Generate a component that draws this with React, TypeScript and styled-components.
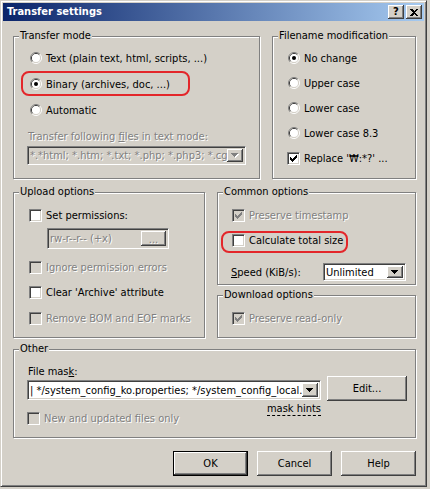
import React from 'react';
import styled, { createGlobalStyle } from 'styled-components';

const FACE = `"DejaVu Sans Condensed", Tahoma, "Liberation Sans", sans-serif`;
const BG = '#D4D0C8';
const SHADOW = '#808080';
const DARK = '#404040';
const RED = '#E3262A';

const GlobalStyle = createGlobalStyle`
  html, body { margin: 0; padding: 0; }
  body {
    width: 430px;
    height: 489px;
    overflow: hidden;
    background: ${BG};
    font-family: ${FACE};
    font-size: 11px;
    color: #000;
  }
`;

const Window = styled.div`
  box-sizing: border-box;
  width: 427px;
  height: 487px;
  background: ${BG};
  border: 1px solid;
  border-color: ${BG} ${DARK} ${DARK} ${BG};
  box-shadow: inset 1px 1px 0 #fff, inset -1px -1px 0 ${SHADOW};
  padding: 2px;
  display: flex;
  flex-direction: column;
`;

const TitleBar = styled.div`
  flex: none;
  height: 18px;
  display: flex;
  align-items: center;
  padding: 0 2px 0 4px;
  background: linear-gradient(90deg, #0a246a, #a6caf0);
`;

const TitleText = styled.div`
  flex: 1;
  color: #fff;
  font-weight: bold;
  font-size: 11px;
  line-height: 18px;
`;

const CaptionButton = styled.div`
  box-sizing: border-box;
  width: 16px;
  height: 14px;
  background: ${BG};
  box-shadow: inset -1px -1px 0 ${DARK}, inset 1px 1px 0 #fff, inset -2px -2px 0 ${SHADOW};
  display: flex;
  align-items: center;
  justify-content: center;
  font-family: "DejaVu Sans", sans-serif;
  font-weight: bold;
  font-size: 10px;
  line-height: 1;
  & + & {
    margin-left: 2px;
  }
`;

const Body = styled.div`
  padding: 15px 0 0 10px;
  display: flex;
  flex-direction: column;
`;

const Row = styled.div<{ $cols: string; $mt?: number }>`
  display: grid;
  grid-template-columns: ${p => p.$cols};
  column-gap: 12px;
  margin-top: ${p => p.$mt ?? 0}px;
`;

const Column = styled.div<{ $gap: number }>`
  display: flex;
  flex-direction: column;
  gap: ${p => p.$gap}px;
`;

const Group = styled.div<{ $h: number; $pt: number; $pl: number; $gap?: number }>`
  position: relative;
  box-sizing: border-box;
  height: ${p => p.$h}px;
  border: 1px solid ${SHADOW};
  box-shadow: inset 1px 1px 0 #fff, 1px 1px 0 #fff;
  padding: ${p => p.$pt}px 4px 0 ${p => p.$pl}px;
  display: flex;
  flex-direction: column;
  gap: ${p => p.$gap ?? 0}px;
`;

const GroupTitle = styled.span`
  position: absolute;
  top: -8px;
  left: 5px;
  padding: 0 1px;
  background: ${BG};
  line-height: 14px;
  white-space: nowrap;
`;

const Option = styled.div<{ $disabled?: boolean; $mt?: number }>`
  position: relative;
  flex: none;
  display: flex;
  align-items: center;
  gap: 4px;
  height: 16px;
  margin-top: ${p => p.$mt ?? 0}px;
  white-space: nowrap;
  color: ${p => (p.$disabled ? SHADOW : '#000')};
  text-shadow: ${p => (p.$disabled ? '1px 1px 0 #fff' : 'none')};
`;

const Mark = styled.span<{ $l: number; $t: number; $w: number; $h: number }>`
  position: absolute;
  left: ${p => p.$l}px;
  top: ${p => p.$t}px;
  width: ${p => p.$w}px;
  height: ${p => p.$h}px;
  box-sizing: border-box;
  border: 2px solid ${RED};
  border-radius: 8px;
  pointer-events: none;
`;

const GlyphBox = styled.span`
  flex: none;
  width: 13px;
  height: 13px;
  display: flex;
  align-items: center;
  justify-content: center;
`;

const CheckFrame = styled.span<{ $disabled?: boolean }>`
  box-sizing: border-box;
  flex: none;
  width: 13px;
  height: 13px;
  border: 1px solid;
  border-color: ${SHADOW} #fff #fff ${SHADOW};
  box-shadow: inset 1px 1px 0 ${DARK}, inset -1px -1px 0 ${BG};
  background: ${p => (p.$disabled ? BG : '#fff')};
  display: flex;
  align-items: center;
  justify-content: center;
`;

const Label = styled.div<{ $disabled?: boolean; $ml?: number; $mt?: number }>`
  flex: none;
  line-height: 13px;
  white-space: nowrap;
  margin-left: ${p => p.$ml ?? 0}px;
  margin-top: ${p => p.$mt ?? 0}px;
  color: ${p => (p.$disabled ? SHADOW : '#000')};
  text-shadow: ${p => (p.$disabled ? '1px 1px 0 #fff' : 'none')};
`;

const Field = styled.div<{ $w: number; $h: number; $disabled?: boolean; $ml?: number; $mt?: number }>`
  box-sizing: border-box;
  flex: none;
  width: ${p => p.$w}px;
  height: ${p => p.$h}px;
  margin-left: ${p => p.$ml ?? 0}px;
  margin-top: ${p => p.$mt ?? 0}px;
  border: 1px solid;
  border-color: ${SHADOW} #fff #fff ${SHADOW};
  box-shadow: inset 1px 1px 0 ${DARK}, inset -1px -1px 0 ${BG};
  background: ${p => (p.$disabled ? BG : '#fff')};
  padding: 2px;
  display: flex;
  align-items: stretch;
`;

const FieldText = styled.span<{ $disabled?: boolean }>`
  flex: 1;
  min-width: 0;
  overflow: hidden;
  white-space: nowrap;
  display: flex;
  align-items: center;
  color: ${p => (p.$disabled ? SHADOW : '#000')};
  text-shadow: ${p => (p.$disabled ? '1px 1px 0 #fff' : 'none')};
`;

const DropButton = styled.span<{ $w?: number }>`
  flex: none;
  box-sizing: border-box;
  width: ${p => p.$w ?? 16}px;
  background: ${BG};
  box-shadow: inset -1px -1px 0 ${DARK}, inset 1px 1px 0 #fff, inset -2px -2px 0 ${SHADOW};
  display: flex;
  align-items: center;
  justify-content: center;
`;

const Ellipsis = styled(DropButton)`
  color: ${SHADOW};
  text-shadow: 1px 1px 0 #fff;
  line-height: 1;
  padding-top: 2px;
`;

const SpeedRow = styled.div`
  display: flex;
  align-items: center;
  margin-top: 6px;
  margin-left: -1px;
`;

const SpeedLabel = styled(Label)`
  width: 92px;
`;

const OtherGrid = styled.div`
  display: grid;
  grid-template-columns: 294px 80px;
  column-gap: 6px;
  grid-template-rows: 13px 20px auto;
  row-gap: 2px;
`;

const MaskLabel = styled(Label)`
  grid-column: 1;
  grid-row: 1;
`;

const MaskField = styled(Field)`
  grid-column: 1;
  grid-row: 2;
`;

const MaskRow = styled.div`
  grid-column: 1;
  grid-row: 3;
  display: flex;
  justify-content: space-between;
  align-items: flex-start;
`;

const Hint = styled.span`
  line-height: 12px;
  border-bottom: 1px dashed #000;
  margin-top: 1px;
`;

const PushButton = styled.button<{ $default?: boolean; $w: number; $h: number }>`
  box-sizing: border-box;
  width: ${p => p.$w}px;
  height: ${p => p.$h}px;
  padding: 0;
  border: none;
  background: ${BG};
  font-family: ${FACE};
  font-size: 11px;
  color: #000;
  box-shadow: ${p =>
    p.$default
      ? `inset 0 0 0 1px #000, inset -2px -2px 0 ${DARK}, inset 2px 2px 0 #fff, inset -3px -3px 0 ${SHADOW}`
      : `inset -1px -1px 0 ${DARK}, inset 1px 1px 0 #fff, inset -2px -2px 0 ${SHADOW}`};
`;

const EditButton = styled(PushButton)`
  grid-column: 2;
  grid-row: 2;
  align-self: start;
  margin-top: -4px;
`;

const ButtonBar = styled.div`
  display: flex;
  justify-content: flex-end;
  gap: 9px;
  margin-top: 13px;
  width: 403px;
`;

const Acc = styled.u`
  text-decoration: underline;
`;

function Radio({ checked }: { checked?: boolean }) {
  return (
    <GlyphBox>
      <svg width="12" height="12" viewBox="0 0 12 12">
        <path d="M2.11 9.89 A5.5 5.5 0 0 1 9.89 2.11" fill="none" stroke={SHADOW} strokeWidth="1" />
        <path d="M9.89 2.11 A5.5 5.5 0 0 1 2.11 9.89" fill="none" stroke="#fff" strokeWidth="1" />
        <path d="M2.82 9.18 A4.5 4.5 0 0 1 9.18 2.82" fill="none" stroke={DARK} strokeWidth="1" />
        <path d="M9.18 2.82 A4.5 4.5 0 0 1 2.82 9.18" fill="none" stroke={BG} strokeWidth="1" />
        <circle cx="6" cy="6" r="4" fill="#fff" />
        {checked && <circle cx="6" cy="6" r="2" fill="#000" />}
      </svg>
    </GlyphBox>
  );
}

function Check({ checked, disabled }: { checked?: boolean; disabled?: boolean }) {
  return (
    <CheckFrame $disabled={disabled}>
      {checked && (
        <svg width="7" height="7" viewBox="0 0 7 7" shapeRendering="crispEdges">
          <path d="M0 2 L2 4 L6 0 L7 0 L7 3 L2 7 L0 5 Z" fill={disabled ? SHADOW : '#000'} />
        </svg>
      )}
    </CheckFrame>
  );
}

function Arrow({ disabled }: { disabled?: boolean }) {
  return (
    <svg width="8" height="5" viewBox="0 0 8 5" shapeRendering="crispEdges">
      {disabled && <path d="M1 1 H8 L4.5 5 Z" fill="#fff" />}
      <path d="M0 0 H7 L3.5 4 Z" fill={disabled ? SHADOW : '#000'} />
    </svg>
  );
}

export default function App() {
  return (
    <>
      <GlobalStyle />
      <Window>
        <TitleBar>
          <TitleText>Transfer settings</TitleText>
          <CaptionButton>?</CaptionButton>
          <CaptionButton>
            <svg width="8" height="7" viewBox="0 0 8 7" shapeRendering="crispEdges">
              <path d="M0 0 H2 L4 2 L6 0 H8 L5 3.5 L8 7 H6 L4 5 L2 7 H0 L3 3.5 Z" fill="#000" />
            </svg>
          </CaptionButton>
        </TitleBar>
        <Body>
          <Row $cols="247px 144px">
            <Group $h={143} $pt={13} $pl={15} $gap={10}>
              <GroupTitle>Transfer mode</GroupTitle>
              <Option>
                <Radio />
                <span>Text (plain text, html, scripts, ...)</span>
              </Option>
              <Option>
                <Radio checked />
                <span>Binary (archives, doc, ...)</span>
                <Mark $l={-8} $t={-5} $w={169} $h={25} />
              </Option>
              <Option>
                <Radio />
                <span>Automatic</span>
              </Option>
              <Label $disabled $ml={-1} $mt={2}>
                Transfer following <Acc>f</Acc>iles in text mode:
              </Label>
              <Field $w={219} $h={19} $disabled $ml={-2} $mt={-7}>
                <FieldText $disabled>*.*html; *.htm; *.txt; *.php; *.php3; *.cgi; *.c; *.cpp</FieldText>
                <DropButton>
                  <Arrow disabled />
                </DropButton>
              </Field>
            </Group>
            <Group $h={143} $pt={13} $pl={14} $gap={9}>
              <GroupTitle>Filename modification</GroupTitle>
              <Option>
                <Radio checked />
                <span>No change</span>
              </Option>
              <Option>
                <Radio />
                <span>Upper case</span>
              </Option>
              <Option>
                <Radio />
                <span>Lower case</span>
              </Option>
              <Option>
                <Radio />
                <span>Lower case 8.3</span>
              </Option>
              <Option>
                <Check checked />
                <span>Replace '₩:*?' ...</span>
              </Option>
            </Group>
          </Row>

          <Row $cols="192px 199px" $mt={13}>
            <Group $h={146} $pt={14} $pl={15} $gap={9}>
              <GroupTitle>Upload options</GroupTitle>
              <Option>
                <Check />
                <span>Set permissions:</span>
              </Option>
              <Field $w={122} $h={21} $disabled $ml={18} $mt={-4}>
                <FieldText $disabled>rw-r--r-- (+x)</FieldText>
                <Ellipsis $w={25}>...</Ellipsis>
              </Field>
              <Option $disabled $mt={1}>
                <Check disabled />
                <span>Ignore permission errors</span>
              </Option>
              <Option>
                <Check />
                <span>Clear 'Archive' attribute</span>
              </Option>
              <Option $disabled $mt={1}>
                <Check disabled />
                <span>Remove BOM and EOF marks</span>
              </Option>
            </Group>
            <Column $gap={10}>
              <Group $h={93} $pt={14} $pl={14} $gap={9}>
                <GroupTitle>Common options</GroupTitle>
                <Option $disabled>
                  <Check checked disabled />
                  <span>Preserve timestamp</span>
                </Option>
                <Option>
                  <Check />
                  <span>Calculate total size</span>
                  <Mark $l={-11} $t={-1} $w={127} $h={22} />
                </Option>
                <SpeedRow>
                  <SpeedLabel>
                    <Acc>S</Acc>peed (KiB/s):
                  </SpeedLabel>
                  <Field $w={83} $h={18}>
                    <FieldText>Unlimited</FieldText>
                    <DropButton>
                      <Arrow />
                    </DropButton>
                  </Field>
                </SpeedRow>
              </Group>
              <Group $h={43} $pt={14} $pl={14}>
                <GroupTitle>Download options</GroupTitle>
                <Option $disabled>
                  <Check checked disabled />
                  <span>Preserve read-only</span>
                </Option>
              </Group>
            </Column>
          </Row>

          <Row $cols="403px" $mt={11}>
            <Group $h={89} $pt={15} $pl={13}>
              <GroupTitle>Other</GroupTitle>
              <OtherGrid>
                <MaskLabel $ml={1}>
                  File mas<Acc>k</Acc>:
                </MaskLabel>
                <MaskField $w={294} $h={20}>
                  <FieldText>| */system_config_ko.properties; */system_config_local.properties</FieldText>
                  <DropButton>
                    <Arrow />
                  </DropButton>
                </MaskField>
                <EditButton $w={80} $h={25}>Edit...</EditButton>
                <MaskRow>
                  <Option $disabled $mt={8}>
                    <Check disabled />
                    <span>New and updated files only</span>
                  </Option>
                  <Hint>mask hints</Hint>
                </MaskRow>
              </OtherGrid>
            </Group>
          </Row>

          <ButtonBar>
            <PushButton $default $w={75} $h={25}>OK</PushButton>
            <PushButton $w={75} $h={25}>Cancel</PushButton>
            <PushButton $w={75} $h={25}>Help</PushButton>
          </ButtonBar>
        </Body>
      </Window>
    </>
  );
}
